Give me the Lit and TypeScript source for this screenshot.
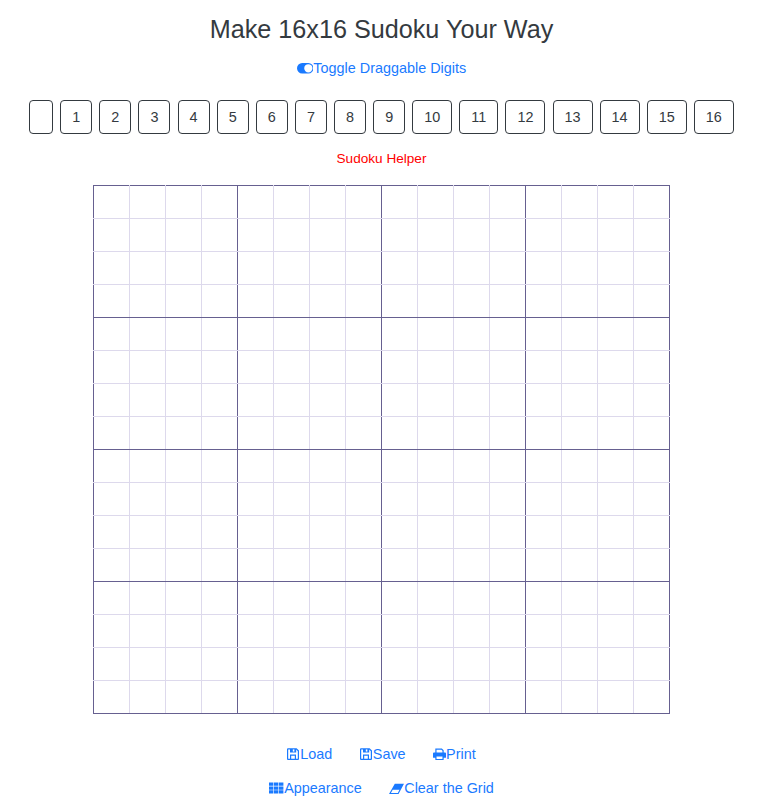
import { LitElement, html, css, svg } from "lit";
import { customElement } from "lit/decorators.js";

const icons = {
  toggle: svg`<svg class="ic tg" viewBox="0 0 16 16"><path fill-rule="evenodd" d="M5 3a5 5 0 0 0 0 10h6a5 5 0 0 0 0-10H5zm6 9a4 4 0 1 1 0-8 4 4 0 0 1 0 8z"/></svg>`,
  floppy: svg`<svg class="ic" viewBox="0 0 13 14"><path fill-rule="evenodd" d="M1 1.200h8.600L12 3.600V12a1 1 0 0 1-1 1H1a1 1 0 0 1-1-1V2.200a1 1 0 0 1 1-1zM1.200 2.400v9.400H3V7.600h6v4.200h1.800V4.200L9.200 2.600v3H3V2.400H1.200zM4.200 8.800v3h3.600v-3H4.200z"/><path d="M5.800 2.400h1.600v2.200H5.800z" fill="#fff"/></svg>`,
  print: svg`<svg class="ic" viewBox="0 0 14 14"><path fill-rule="evenodd" d="M2.500 1.200h7L11.500 3v2.500H13a1 1 0 0 1 1 1v4a.6.6 0 0 1-.6.6h-1.900v1.700a.6.6 0 0 1-.6.6H3.100a.6.6 0 0 1-.6-.6v-1.700H.6a.6.6 0 0 1-.6-.6v-4a1 1 0 0 1 1-1h1.500V1.200zM3.800 2.400v3.100h6.400V3.600L9 2.400H3.800zM3.800 9.800v2.700h6.400V9.800H3.800z"/></svg>`,
  grid: svg`<svg class="ic wide" viewBox="0 0 15 14"><path d="M0 1.500h4.400v3.300H0zM5 1.500h4.400v3.300H5zM10 1.500h4.400v3.300H10zM0 5.400h4.400v3.300H0zM5 5.400h4.400v3.300H5zM10 5.400h4.400v3.300H10zM0 9.300h4.400v3.300H0zM5 9.300h4.400v3.300H5zM10 9.300h4.400v3.300H10z"/></svg>`,
  eraser: svg`<svg class="ic wide" viewBox="0 0 15 14"><path fill-rule="evenodd" d="M5.800 2.800H15L9.500 13H0L5.800 2.800zM1.900 12h6.900l1.700-3.200H3.700L1.900 12z"/></svg>`,
};

const digits = ["", ...Array.from({ length: 16 }, (_, i) => String(i + 1))];

@customElement("app-root")
export class AppRoot extends LitElement {
  static styles = css`
    :host {
      display: block;
      width: 763px;
      height: 801px;
      overflow: hidden;
      background: #fff;
      font-family: "Liberation Sans", Arial, sans-serif;
      font-size: 14.4px;
      color: #343a40;
    }
    .page {
      display: flex;
      flex-direction: column;
      align-items: center;
    }
    h1 {
      margin: 13px 0 0;
      height: 32px;
      font-size: 25.2px;
      line-height: 32px;
      font-weight: 400;
      color: #343a40;
    }
    a {
      display: inline-flex;
      align-items: center;
      color: #1a7aff;
      text-decoration: none;
      line-height: 20px;
    }
    .ic {
      width: 13px;
      height: 14px;
      fill: currentColor;
      flex: none;
    }
    .ic.wide {
      width: 15px;
    }
    .ic.tg {
      width: 16.500px;
      height: 16.500px;
    }
    .toggle {
      margin-top: 13px;
    }
    .digits {
      display: flex;
      gap: 7.100px;
      margin-top: 22px;
    }
    .digit {
      box-sizing: border-box;
      height: 34px;
      min-width: 24px;
      padding: 0 11px;
      border: 1px solid #343a40;
      border-radius: 4px;
      background: #fff;
      color: #343a40;
      font: inherit;
      line-height: 32px;
    }
    .helper {
      margin-top: 15px;
      height: 20px;
      line-height: 20px;
      font-size: 13.6px;
      color: #f00;
    }
    table {
      margin-top: 16px;
      border-collapse: collapse;
      table-layout: fixed;
    }
    td {
      box-sizing: border-box;
      width: 36px;
      height: 33px;
      padding: 0;
      border: 1px solid #ddd9ec;
    }
    td.r,
    td:last-child {
      border-right-color: #666090;
    }
    td.b,
    tr:last-child td {
      border-bottom-color: #666090;
    }
    td:first-child {
      border-left-color: #666090;
    }
    tr:first-child td {
      border-top-color: #666090;
    }
    .row {
      display: flex;
      justify-content: center;
      gap: 27.500px;
    }
    .r1 {
      margin-top: 30px;
    }
    .r2 {
      margin-top: 14px;
    }
  `;

  render() {
    const idx = Array.from({ length: 16 }, (_, i) => i);
    return html`
      <div class="page">
        <h1>Make 16x16 Sudoku Your Way</h1>
        <a class="toggle" href="#">${icons.toggle}Toggle Draggable Digits</a>
        <div class="digits">
          ${digits.map((d) => html`<button class="digit">${d}</button>`)}
        </div>
        <div class="helper">Sudoku Helper</div>
        <table>
          ${idx.map(
            (r) => html`<tr>
              ${idx.map(
                (c) =>
                  html`<td
                    class="${c % 4 === 3 ? "r" : ""} ${r % 4 === 3 ? "b" : ""}"
                  ></td>`
              )}
            </tr>`
          )}
        </table>
        <div class="row r1">
          <a href="#">${icons.floppy}Load</a>
          <a href="#">${icons.floppy}Save</a>
          <a href="#">${icons.print}Print</a>
        </div>
        <div class="row r2">
          <a href="#">${icons.grid}Appearance</a>
          <a href="#">${icons.eraser}Clear the Grid</a>
        </div>
      </div>
    `;
  }
}
